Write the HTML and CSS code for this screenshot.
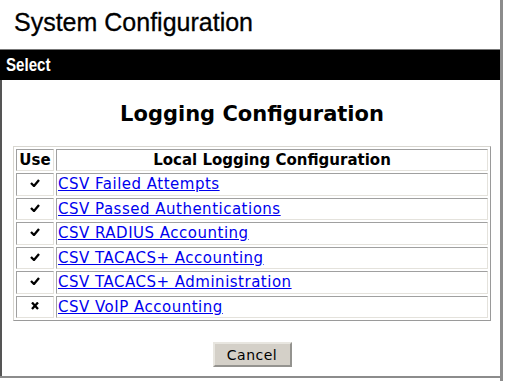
FILE: index.html
```html
<!DOCTYPE html>
<html lang="en">
<head>
  <meta charset="UTF-8">
  <title>System Configuration</title>
  <link rel="stylesheet" href="styles.css">
</head>
<body>
  <div class="window">
    <!-- Cabecera -->
    <h1 class="page-title">System Configuration</h1>

    <div class="frame">
      <div class="select-bar"><span class="select-label">Select</span></div>

      <div class="content">
        <h2 class="section-title">Logging Configuration</h2>

        <table class="log-table">
          <tr class="head-row">
            <th class="use-col">Use</th>
            <th>Local Logging Configuration</th>
          </tr>
          <tr>
            <td class="use-col"><svg class="mark" viewBox="0 0 10 8"><path d="M1 4 L4 7 L9 1" /></svg></td>
            <td><a href="#">CSV Failed Attempts</a></td>
          </tr>
          <tr>
            <td class="use-col"><svg class="mark" viewBox="0 0 10 8"><path d="M1 4 L4 7 L9 1" /></svg></td>
            <td><a href="#">CSV Passed Authentications</a></td>
          </tr>
          <tr>
            <td class="use-col"><svg class="mark" viewBox="0 0 10 8"><path d="M1 4 L4 7 L9 1" /></svg></td>
            <td><a href="#">CSV RADIUS Accounting</a></td>
          </tr>
          <tr>
            <td class="use-col"><svg class="mark" viewBox="0 0 10 8"><path d="M1 4 L4 7 L9 1" /></svg></td>
            <td><a href="#">CSV TACACS+ Accounting</a></td>
          </tr>
          <tr>
            <td class="use-col"><svg class="mark" viewBox="0 0 10 8"><path d="M1 4 L4 7 L9 1" /></svg></td>
            <td><a href="#">CSV TACACS+ Administration</a></td>
          </tr>
          <tr>
            <td class="use-col"><svg class="mark" viewBox="0 0 10 8"><path d="M2 0.5 L8 7 M8 0.5 L2 7" /></svg></td>
            <td><a href="#">CSV VoIP Accounting</a></td>
          </tr>
        </table>

        <div class="actions">
          <button type="button" class="cancel-btn">Cancel</button>
        </div>
      </div>
    </div>
  </div>
</body>
</html>
```

FILE: styles.css
```css
/* Estilos generales */
:root {
  --frame-gray: #8c8c8c;
  --cell-dark: #a0a0a0;
  --cell-light: #e4e2dc;
  --button-face: #d4d0c8;
  --link-color: #0000ee;
}

body {
  margin: 0;
  padding: 0;
  background-color: white;
  font-family: 'DejaVu Sans', Verdana, sans-serif;
  color: #000;
}

.window {
  width: 500px;
  height: 381px;
  border-right: 3px solid var(--frame-gray);
  display: flex;
  flex-direction: column;
}

/* Titulo superior */
.page-title {
  margin: 0;
  height: 49px;
  padding: 4px 0 0 14px;
  box-sizing: border-box;
  font-family: 'Liberation Sans', Arial, sans-serif;
  font-weight: normal;
  font-size: 25px;
  line-height: 36px;
  -webkit-text-stroke: 0.3px black;
}

.frame {
  flex: 1;
  display: flex;
  flex-direction: column;
  margin-bottom: 3px;
  border-bottom: 2px solid var(--frame-gray);
}

.select-bar {
  height: 30px;
  border-top: 1px solid #777;
  background-color: black;
  color: white;
  padding-left: 6px;
  font-family: 'Liberation Sans', Arial, sans-serif;
  font-weight: bold;
  font-size: 18px;
  line-height: 30px;
}

.select-label {
  display: inline-block;
  transform: scaleX(0.84);
  transform-origin: left center;
}

.content {
  flex: 1;
  border-left: 2px solid #555;
  padding: 0 9px 0 11px;
  display: flex;
  flex-direction: column;
}

.section-title {
  margin: 21px 0 19px;
  text-align: center;
  font-size: 21px;
  line-height: 26px;
}

/* Tabla de logs */
.log-table {
  width: 100%;
  border-collapse: separate;
  border-spacing: 2px;
  border: 1px solid;
  border-color: #d8d6d0 #9a9a9a #9a9a9a #d8d6d0;
  font-size: 15px;
}

.log-table th,
.log-table td {
  height: 20.5px;
  padding: 0 1px;
  border: 1px solid;
  border-color: var(--cell-dark) var(--cell-light) var(--cell-light) var(--cell-dark);
  line-height: 20px;
}

.head-row th {
  height: 20px;
}

.log-table th {
  text-align: center;
}

.use-col {
  width: 34px;
  text-align: center;
}

.log-table a {
  color: var(--link-color);
  text-decoration: underline;
  letter-spacing: 0.5px;
}

.mark {
  width: 10px;
  height: 8px;
  vertical-align: 2px;
  fill: none;
  stroke: black;
  stroke-width: 2.3;
}

/* Boton cancelar */
.actions {
  display: flex;
  justify-content: center;
  margin-top: 21px;
}

.cancel-btn {
  width: 79px;
  height: 25px;
  background-color: var(--button-face);
  border: 2px outset #e8e6e0;
  font-family: 'DejaVu Sans', Verdana, sans-serif;
  font-size: 14px;
  letter-spacing: 0.5px;
  color: #000;
  padding: 0;
}
```
